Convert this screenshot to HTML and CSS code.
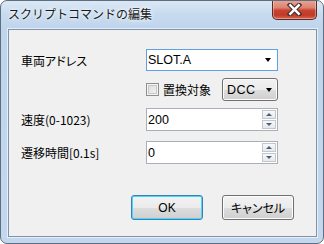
FILE: index.html
```html
<!DOCTYPE html>
<html lang="ja">
<head>
<meta charset="utf-8">
<title>スクリプトコマンドの編集</title>
<link rel="stylesheet" href="styles.css">
</head>
<body>
<div class="window">
  <div class="titlebar">
    <span class="title">スクリプトコマンドの編集</span>
    <div class="close">
      <svg width="15" height="13" viewBox="0 0 15 13">
        <path d="M3 2 L12 11 M12 2 L3 11" stroke="#4a3030" stroke-width="4.6" stroke-linecap="square" fill="none"/>
        <path d="M3.3 2.3 L11.7 10.7 M11.7 2.3 L3.3 10.7" stroke="#ffffff" stroke-width="2.4" stroke-linecap="square" fill="none"/>
      </svg>
    </div>
  </div>
  <div class="client">
    <div class="form">
      <div class="row">
        <span class="label">車両アドレス</span>
        <div class="combo focus">
          <span class="value">SLOT.A</span>
          <span class="arrow"></span>
        </div>
      </div>
      <div class="row row-check">
        <span class="label"></span>
        <div class="checkgroup">
          <span class="check"></span>
          <span class="checklabel">置換対象</span>
          <div class="dcc">
            <span class="value">DCC</span>
            <span class="arrow"></span>
          </div>
        </div>
      </div>
      <div class="row">
        <span class="label">速度(0-1023)</span>
        <div class="spin">
          <span class="value">200</span>
          <div class="spinbtns">
            <span class="sb up"><i></i></span>
            <span class="sb down"><i></i></span>
          </div>
        </div>
      </div>
      <div class="row row-last">
        <span class="label">遷移時間[0.1s]</span>
        <div class="spin">
          <span class="value">0</span>
          <div class="spinbtns">
            <span class="sb up"><i></i></span>
            <span class="sb down"><i></i></span>
          </div>
        </div>
      </div>
    </div>
    <div class="buttons">
      <div class="btn default">OK</div>
      <div class="btn">キャンセル</div>
    </div>
  </div>
</div>
</body>
</html>
```
FILE: styles.css
```css
html, body {
  margin: 0;
  padding: 0;
  background: #ffffff;
}
body {
  font-family: "Noto Sans CJK JP", "Liberation Sans", sans-serif;
  font-size: 12px;
  font-weight: 400;
  color: #000;
}
.window {
  width: 324px;
  height: 244px;
  box-sizing: border-box;
  border: 1px solid #5f6e7e;
  border-radius: 7px;
  background: linear-gradient(180deg, #dbe8f5 0px, #c6daef 14px, #bfd5ec 28px, #c3d8ee 100%);
  padding: 0 6px 6px 7px;
  display: flex;
  flex-direction: column;
  overflow: hidden;
}
.titlebar {
  height: 28px;
  display: flex;
  align-items: flex-start;
  flex: none;
}
.title {
  padding-top: 4px;
  line-height: 18px;
  font-size: 12px;
  color: #1a1a1a;
  text-shadow: 0 0 6px #ffffff, 0 0 3px #ffffff;
}
.close {
  margin-left: auto;
  margin-top: -1px;
  width: 45px;
  height: 20px;
  box-sizing: border-box;
  border: 1px solid #5b2a22;
  border-top: none;
  border-radius: 0 0 5px 5px;
  background: linear-gradient(180deg, #e9a797 0%, #dd8371 40%, #c8432f 55%, #c0392a 80%, #d86a52 100%);
  display: flex;
  align-items: center;
  justify-content: center;
  box-shadow: inset 0 0 0 1px rgba(255,255,255,0.35);
}
.client {
  flex: 1;
  border: 1px solid #7f93ab;
  background: #f0f0f0;
  display: flex;
  flex-direction: column;
  box-shadow: 0 0 0 1px rgba(255,255,255,0.6);
}
.form {
  padding: 19px 0 0 12px;
  display: flex;
  flex-direction: column;
  gap: 7px;
}
.row {
  display: flex;
  align-items: center;
  height: 23px;
}
.row:first-child {
  height: 22px;
}
.row-last {
  margin-top: 3px;
}
.label {
  width: 125px;
  flex: none;
  font-feature-settings: "palt";
  line-height: 14px;
  padding-top: 1px;
}
.combo, .spin {
  width: 132px;
  height: 100%;
  box-sizing: border-box;
  background: #ffffff;
  display: flex;
  align-items: center;
  position: relative;
}
.combo.focus {
  border: 1px solid #5ea1e6;
}
.spin {
  border: 1px solid #a9b0b9;
}
.value {
  font-family: "Liberation Sans", sans-serif;
  font-size: 12.5px;
  padding-left: 1px;
  line-height: 14px;
}
.combo .arrow {
  margin-left: auto;
  margin-right: 6px;
}
.arrow {
  width: 0;
  height: 0;
  border-left: 3.5px solid transparent;
  border-right: 3.5px solid transparent;
  border-top: 4px solid #000;
}
.checkgroup {
  display: flex;
  align-items: center;
  height: 100%;
}
.check {
  width: 13px;
  height: 13px;
  box-sizing: border-box;
  border: 1px solid #8e8f8f;
  background: linear-gradient(135deg, #d9d9d9 0%, #eaeaea 60%, #f6f6f6 100%);
  box-shadow: inset 0 0 0 1px #f4f4f4, inset 0 0 0 2px #c8c8c8;
}
.checklabel {
  margin-left: 4px;
  width: 59px;
  line-height: 14px;
}
.dcc {
  width: 56px;
  height: 23px;
  box-sizing: border-box;
  border: 1px solid #707070;
  border-radius: 3px;
  background: linear-gradient(180deg, #f2f2f2 0%, #ebebeb 50%, #dddddd 51%, #cfcfcf 100%);
  box-shadow: inset 0 0 0 1px #fbfbfb;
  display: flex;
  align-items: center;
  padding-left: 3px;
}
.dcc .value {
  letter-spacing: 0.5px;
}
.dcc .arrow {
  margin-left: auto;
  margin-right: 5px;
}
.spinbtns {
  margin-left: auto;
  margin-right: 1px;
  display: flex;
  flex-direction: column;
  gap: 1px;
  height: 19px;
}
.sb {
  width: 14px;
  height: 9px;
  box-sizing: border-box;
  border: 1px solid #c3c6cb;
  background: linear-gradient(180deg, #f8f8f8 0%, #e8e8e8 100%);
  display: flex;
  align-items: center;
  justify-content: center;
}
.sb i {
  width: 0;
  height: 0;
  border-left: 3px solid transparent;
  border-right: 3px solid transparent;
}
.sb.up i {
  border-bottom: 3px solid #4a5f85;
}
.sb.down i {
  border-top: 3px solid #4a5f85;
}
.buttons {
  display: flex;
  justify-content: flex-end;
  gap: 19px;
  padding: 31px 22px 0 0;
}
.btn {
  width: 72px;
  height: 25px;
  box-sizing: border-box;
  border: 1px solid #707070;
  border-radius: 3px;
  background: linear-gradient(180deg, #f2f2f2 0%, #ebebeb 50%, #dddddd 51%, #cfcfcf 100%);
  box-shadow: inset 0 0 0 1px #fcfcfc;
  display: flex;
  align-items: center;
  justify-content: center;
  font-feature-settings: "palt";
  line-height: 14px;
}
.btn.default {
  border-color: #3c7fb1;
  box-shadow: inset 0 0 0 1px #48d8fb;
  font-family: "Liberation Sans", sans-serif;
}
```
